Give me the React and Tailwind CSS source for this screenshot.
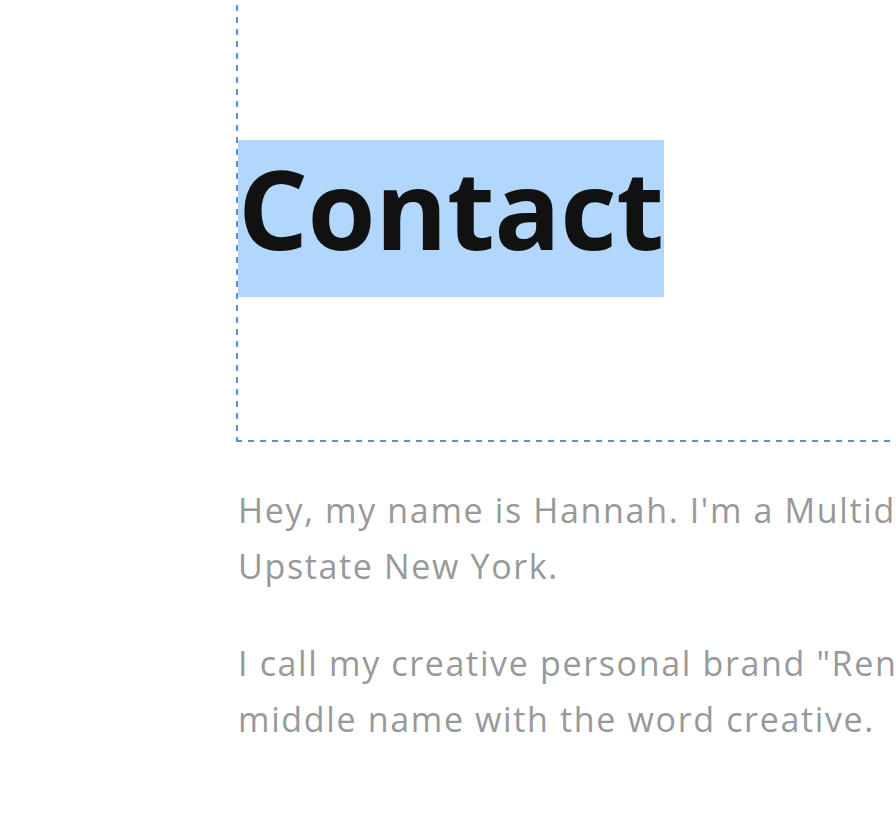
import React from 'react';

const dashV = 'bg-[repeating-linear-gradient(to_bottom,transparent_0_5px,#5f8dd2_5px_11px,transparent_11px_12px)]';

export default function App() {
  return (
    <div className="w-[896px] h-[838px] overflow-hidden bg-white font-['Open_Sans','Liberation_Sans',sans-serif]">
      <div className="pl-[236px] w-[1600px]">
        {/* dashed block around the heading, top and right edges are off screen */}
        <div className="flex h-[440px]">
          <div className={`w-[2px] shrink-0 ${dashV}`} />
          <div className="pt-[140px]">
            <h1 className="m-0">
              <span className="inline-block h-[157px] leading-[135px] pb-[22px] bg-[#b2d7fc] text-[#111111] font-bold text-[110px] tracking-[-0.5px]">
                Contact
              </span>
            </h1>
          </div>
        </div>
        <div className="h-[2px] bg-[repeating-linear-gradient(to_right,#5f8dd2_0_6px,transparent_6px_12px)]" />

        <div className="pt-[40px] pl-[2px] text-[#999999] text-[34px] leading-[56px] tracking-[1.65px] whitespace-nowrap">
          <p className="mb-[41px]">
            Hey, my name is Hannah. I'm a Multidisciplinary Designer based in
            <br />
            Upstate New York.
          </p>
          <p>
            I call my creative personal brand "Renative" because it combines my
            <br />
            middle name with the word creative.
          </p>
        </div>
      </div>
    </div>
  );
}
